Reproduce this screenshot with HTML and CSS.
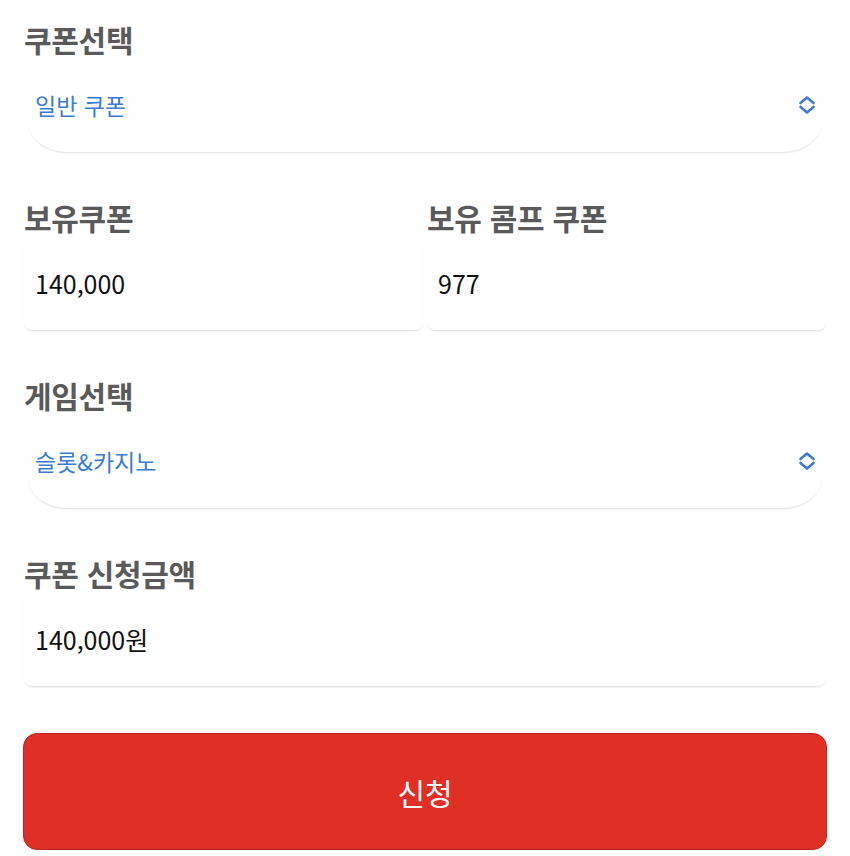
FILE: index.html
```html
<!DOCTYPE html>
<html lang="ko">
<head>
<meta charset="utf-8">
<link rel="stylesheet" href="styles.css">
</head>
<body>
<div class="page">
  <div class="group">
    <div class="label">쿠폰선택</div>
    <div class="select">
      <span class="select-text">일반 쿠폰</span>
      <svg class="chev" width="18" height="20" viewBox="0 0 18 20"><path d="M2.5 8 L9 2.5 L15.5 8 M2.5 12 L9 17.5 L15.5 12" fill="none" stroke="#3b7bd4" stroke-width="2.6" stroke-linecap="round" stroke-linejoin="round"/></svg>
    </div>
  </div>
  <div class="group row">
    <div class="col">
      <div class="label">보유쿠폰</div>
      <div class="input">140,000</div>
    </div>
    <div class="col">
      <div class="label">보유 콤프 쿠폰</div>
      <div class="input">977</div>
    </div>
  </div>
  <div class="group">
    <div class="label">게임선택</div>
    <div class="select">
      <span class="select-text">슬롯&amp;카지노</span>
      <svg class="chev" width="18" height="20" viewBox="0 0 18 20"><path d="M2.5 8 L9 2.5 L15.5 8 M2.5 12 L9 17.5 L15.5 12" fill="none" stroke="#3b7bd4" stroke-width="2.6" stroke-linecap="round" stroke-linejoin="round"/></svg>
    </div>
  </div>
  <div class="group">
    <div class="label">쿠폰 신청금액</div>
    <div class="input">140,000원</div>
  </div>
  <button class="submit">신청</button>
</div>
</body>
</html>
```
FILE: styles.css
```css
* { box-sizing: border-box; }
html, body { margin: 0; padding: 0; background: #fff; }
body {
  font-family: "Noto Sans CJK KR", sans-serif;
  width: 850px;
  height: 856px;
  overflow: hidden;
}
.page {
  padding: 21px 24px 0 24px;
  display: flex;
  flex-direction: column;
  gap: 47px;
}
.group { display: flex; flex-direction: column; }
.row { flex-direction: row; gap: 4px; }
.col { flex: 1; display: flex; flex-direction: column; }
.label {
  height: 40px;
  line-height: 36px;
  font-size: 30px;
  font-weight: 700;
  color: #5a5a5a;
  letter-spacing: -0.3px;
}
.select {
  margin: 0 4px;
  height: 91px;
  padding: 30px 6px 0 7px;
  display: flex;
  align-items: flex-start;
  justify-content: space-between;
  background: #fff;
  border-radius: 0 0 40px 40px / 0 0 30px 30px;
  box-shadow: 0 2px 2px -1px rgba(0, 0, 0, 0.14);
}
.select-text {
  line-height: 28px;
  font-size: 23px;
  color: #3b7bd4;
}
.chev { margin-top: 4px; }
.input {
  height: 91px;
  padding: 30px 11px 0 11px;
  line-height: 28px;
  font-size: 25px;
  color: #111;
  background: #fff;
  border-radius: 0 0 8px 8px;
  box-shadow: 0 2px 2px -1px rgba(0, 0, 0, 0.15);
}
.submit {
  height: 117px;
  width: calc(100% + 2px);
  margin: 0 0 0 -1px;
  padding: 0;
  background: #e02f25;
  border: 1px solid #b9291f;
  border-radius: 14px;
  color: #fff;
  font-size: 30px;
  font-family: "Noto Sans CJK KR", sans-serif;
  font-weight: 400;
}
```
